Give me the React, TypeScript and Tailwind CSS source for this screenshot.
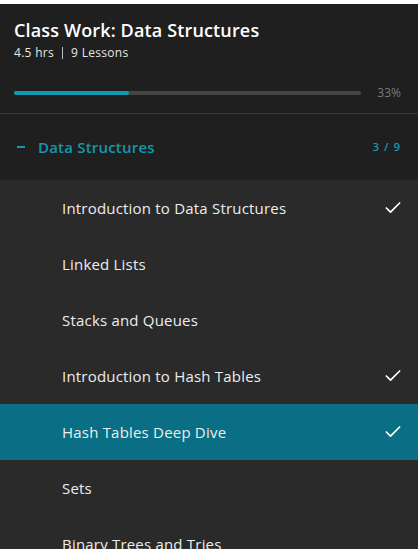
import { Check } from 'lucide-react';

type Lesson = {
  title: string;
  done: boolean;
  active?: boolean;
};

const lessons: Lesson[] = [
  { title: 'Introduction to Data Structures', done: true },
  { title: 'Linked Lists', done: false },
  { title: 'Stacks and Queues', done: false },
  { title: 'Introduction to Hash Tables', done: true },
  { title: 'Hash Tables Deep Dive', done: true, active: true },
  { title: 'Sets', done: false },
  { title: 'Binary Trees and Tries', done: false },
];

export default function App() {
  const progress = 33;

  return (
    <div className="h-[549px] w-[418px] overflow-hidden bg-white pt-[4px] font-['Open_Sans',sans-serif]">
      <div className="h-full bg-[#1f1f1f]">
        {/* header */}
        <div className="px-[14px] pt-[14px] border-b border-[#3a3a3a] h-[110px]">
          <h1 className="text-[18px] font-semibold leading-[24px] tracking-[0.15px] text-white">
            Class Work: Data Structures
          </h1>
          <div className="mt-[3px] flex items-center text-[12px] leading-[16px] tracking-[0.3px] text-[#e6e6e6]">
            <span>4.5 hrs</span>
            <span className="mx-[8px] h-[12px] w-px bg-[#bdbdbd]" />
            <span>9 Lessons</span>
          </div>
          <div className="mt-[23px] flex items-center">
            <div className="h-[4px] w-[347px] rounded-full bg-[#444444]">
              <div className="h-full rounded-full bg-[#1399b0]" style={{ width: `${progress}%` }} />
            </div>
            <span className="ml-auto mr-[3px] text-[12px] text-[#7a7a7a]">{progress}%</span>
          </div>
        </div>

        {/* section */}
        <div className="flex h-[66px] items-center px-[17px] text-[#1597ae]">
          <span className="h-[2px] w-[8px] bg-[#1597ae]" />
          <span className="ml-[13px] text-[15px] font-semibold tracking-[0.2px]">Data Structures</span>
          <span className="ml-auto text-[11.5px] font-semibold tracking-[1px]">3 / 9</span>
        </div>

        <ul className="bg-[#2a2a2a]">
          {lessons.map((l) => (
            <li
              key={l.title}
              className={`flex h-[56px] items-center pl-[62px] pr-[15px] text-[15px] leading-[20px] tracking-[0.2px] text-[#ededed] ${
                l.active ? 'bg-[#0a6e84]' : ''
              }`}
            >
              <span className="-mt-[1px]">{l.title}</span>
              {l.done && <Check className="ml-auto h-[20px] w-[20px] text-white" strokeWidth={2} />}
            </li>
          ))}
        </ul>
      </div>
    </div>
  );
}
